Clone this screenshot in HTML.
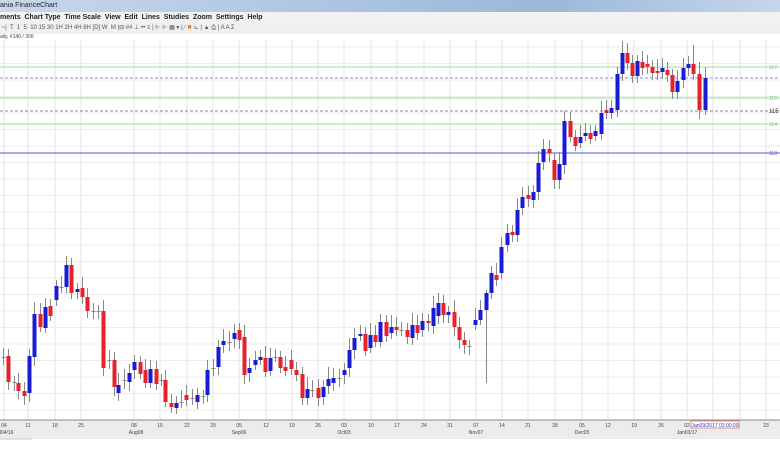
<!DOCTYPE html><html><head><style>
body{margin:0;width:780px;height:470px;overflow:hidden;background:#fff;font-family:"Liberation Sans",sans-serif}
.t{position:absolute;left:0;top:0;width:780px;height:12px;background:linear-gradient(90deg,#c9d8ea,#aec6e2 40%,#9bb8da 70%,#c6d6ea);font-size:7px;color:#223;line-height:12px}
.m{position:absolute;left:0;top:12px;width:780px;height:11px;background:#f2f2f2;font-size:7px;font-weight:bold;color:#222;line-height:11px;white-space:pre}
.tb{position:absolute;left:0;top:23px;width:780px;height:11px;background:#eef0f3;font-size:6px;color:#555;line-height:11px;white-space:pre}
.s{position:absolute;left:0;top:34px;width:780px;height:6px;font-size:5px;color:#444;line-height:6px}
</style></head><body>
<div class="t">ania FinanceChart</div>
<div class="m">ments  Chart Type  Time Scale  View  Edit  Lines  Studies  Zoom  Settings  Help</div>
<div class="tb"> ~|  T  1  5  10 15 30 1H 2H 4H 8H [D] W  M |⊟ ## ⊥ •• ≡ | ⊩ ⊩ ▦ ▾ | ⁄ <span style="color:#e60">✖</span> ⊾ | ▲ ⎙ | A A Σ</div>
<div class="s">aily, #140 / 300</div>
<svg id="c" style="position:absolute;left:0;top:0" width="780" height="470"></svg>
<script>
var s='';
s+='<rect x="0" y="40" width="780" height="380" fill="#fff"/>';
for(var y=47;y<420;y+=16.5)s+='<line x1="0" x2="780" y1="'+y+'" y2="'+y+'" stroke="#ececec" stroke-width="1"/>';
var xs=[4,28,55,81,134,160,187,213,239,266,292,318,344,371,397,424,450,476,502,528,555,582,608,634,661,687,713,740,766];
var lb=["04","11","18","25","08","15","22","29","05","12","19","26","03","10","17","24","31","07","14","21","28","05","12","19","26","02","09","16","23"];
xs.forEach(function(x){s+='<line x1="'+x+'" x2="'+x+'" y1="40" y2="420" stroke="#e6e6e6"/>';});
s+='<line x1="0" x2="780" y1="67" y2="67" stroke="#9fdc9f"/><line x1="0" x2="780" y1="78" y2="78" stroke="#8888dd" stroke-dasharray="3,2"/><line x1="0" x2="780" y1="98" y2="98" stroke="#9fdc9f"/><line x1="0" x2="780" y1="111" y2="111" stroke="#888" stroke-dasharray="3,2"/><line x1="0" x2="780" y1="124" y2="124" stroke="#9fdc9f"/><line x1="0" x2="780" y1="153" y2="153" stroke="#7777dd" stroke-width="1.2"/>';
s+='<text x="769" y="69" font-size="5" fill="#7c7">117</text><text x="769" y="100" font-size="5" fill="#7c7">115</text><text x="769" y="113" font-size="6" fill="#333">115</text><text x="769" y="126" font-size="5" fill="#7c7">114</text><text x="769" y="155" font-size="5" fill="#66c">113</text>';
var d=[[3,357,357],[8,356,382],[14,382,382],[18,383,391],[24,391,396],[29,393,356],[34,357,314],[40,314,327],[45,328,307],[50,306,316],[56,300,286],[61,287,287],[66,287,265],[71,265,293],[77,292,289],[82,288,297],[87,297,311],[93,311,311],[98,311,311],[103,311,368],[109,360,360],[114,360,387],[118,393,385],[124,380,380],[129,382,373],[134,370,362],[140,362,374],[145,370,383],[150,383,369],[156,369,384],[161,380,380],[165,380,402],[171,403,407],[176,408,403],[181,402,402],[186,395,400],[192,398,398],[197,402,395],[203,396,396],[207,395,370],[213,368,368],[218,367,347],[223,345,341],[229,342,342],[234,339,333],[239,330,340],[244,337,375],[249,373,368],[255,365,360],[260,360,357],[265,358,372],[270,371,358],[275,357,357],[280,357,368],[285,367,371],[291,360,369],[296,370,375],[302,374,398],[307,398,389],[312,390,390],[318,388,398],[323,397,387],[328,386,379],[333,383,378],[339,378,378],[344,375,370],[349,368,350],[354,350,338],[360,336,334],[365,334,351],[370,348,335],[375,335,342],[380,342,322],[386,322,336],[391,333,327],[396,327,330],[401,330,330],[407,330,337],[412,338,325],[417,325,333],[422,330,321],[428,321,323],[433,326,308],[438,316,303],[443,303,315],[448,315,312],[454,312,327],[459,327,340],[464,340,345],[469,346,346],[475,325,320],[480,320,310],[486,310,293,290,383],[491,293,273],[496,275,280],[501,273,247],[507,245,233],[512,232,235],[517,235,210],[522,208,197],[528,195,199],[533,200,192],[538,192,163],[543,162,149],[549,149,153],[554,160,180],[559,180,164],[564,165,121],[570,121,137],[575,137,146],[580,143,137],[585,136,133],[590,133,139],[595,136,131],[601,134,113],[606,110,113],[611,113,108],[617,110,74],[622,74,53],[627,53,63],[632,63,76],[637,76,61],[642,62,68],[647,64,67],[652,67,73],[657,71,73],[662,72,68],[667,70,75],[672,75,92],[677,92,81],[683,80,68],[688,68,64],[693,64,74,45,80],[699,74,110],[705,110,78]];
d.forEach(function(c){var x=c[0],o=c[1],cl=c[2],t=Math.min(o,cl),b=Math.max(o,cl);var h=c[3]||t-6-(x%7),l=c[4]||b+5+(x%5);
s+='<line x1="'+(x+.5)+'" x2="'+(x+.5)+'" y1="'+h+'" y2="'+l+'" stroke="#888"/>';
var col=o==cl?'#888':(cl<o?'#1b1bd6':'#e5232b');var hh=Math.max(1,b-t);
s+='<rect x="'+(x-1.5)+'" y="'+t+'" width="4" height="'+hh+'" fill="'+col+'"/>';});
s+='<rect x="0" y="420" width="780" height="19" fill="#ececec"/><line x1="0" x2="780" y1="420" y2="420" stroke="#888"/>';
xs.forEach(function(x,i){if(i==26||i==27)return;s+='<text x="'+x+'" y="427" font-size="5" fill="#444" text-anchor="middle">'+lb[i]+'</text>';});
[[4,"Jul04/16"],[136,"Aug08"],[239,"Sep06"],[344,"Oct03"],[476,"Nov07"],[582,"Dec05"],[687,"Jan03/17"]].forEach(function(m){s+='<text x="'+m[0]+'" y="434" font-size="5" fill="#444" text-anchor="middle">'+m[1]+'</text>';});
s+='<rect x="691" y="421" width="48" height="7" fill="#fff" stroke="#e88"/><text x="715" y="427" font-size="5" fill="#33c" text-anchor="middle">Jan09/2017 03:00:00</text>';
s+='<line x1="0" x2="32" y1="439" y2="439" stroke="#ccc"/>';
document.getElementById('c').innerHTML=s;
</script></body></html>
